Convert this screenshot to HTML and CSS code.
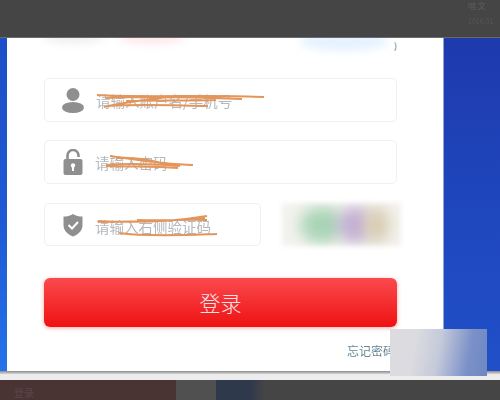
FILE: index.html
```html
<!DOCTYPE html>
<html lang="zh">
<head>
<meta charset="utf-8">
<title>登录</title>
<link rel="stylesheet" href="styles.css">
</head>
<body>
<div class="page">
  <header class="topbar">
    <div class="top-note"><span>啮 文</span><span class="top-date">2016.01</span></div>
  </header>
  <main class="stage">
    <div class="rail"></div>
    <section class="panel">
      <span class="blob blob-gray"></span>
      <span class="blob blob-pink"></span>
      <span class="blob blob-blue"></span>
      <span class="paren">)</span>
      <form class="form">
        <div class="field">
          <svg class="icon" viewBox="0 0 22 25"><circle cx="11" cy="6.500" r="6.500"/><ellipse cx="11" cy="19.500" rx="11" ry="5.500"/></svg>
          <span class="hint">请输入账户名/手机号</span>
          <svg class="scribble" viewBox="0 0 170 24"><path d="M1 5C50 8 120 4 168 7M10 8C50 6 100 7 146 9M8 17C30 12 50 10 72 7M12 16C40 14 60 15 112 16M30 11C60 10 90 11 120 10"/></svg>
        </div>
        <div class="field">
          <svg class="icon icon-lock" viewBox="0 0 20 26"><path d="M4.500 11V6.500a5.500 5.500 0 0 1 11 0V8" class="shackle"/><rect x="0.500" y="10" width="19" height="16" rx="2"/><circle class="cut" cx="10" cy="16.500" r="2.200"/><rect class="cut" x="9" y="17" width="2" height="5"/></svg>
          <span class="hint">请输入密码</span>
          <svg class="scribble scribble-short" viewBox="0 0 92 24"><path d="M8 5C30 8 60 13 91 14M4 14C30 12 50 13 78 15M4 15C30 16 50 15 76 17M14 7C30 6 50 9 66 14"/></svg>
        </div>
        <div class="code-row">
          <div class="field field-code">
            <svg class="icon icon-shield" viewBox="0 0 20 24"><path d="M10 1C13 3 16 3.500 19.500 3.500V12C19.500 18 15 21.500 10 23.500C5 21.500 .5 18 .5 12V3.500C4 3.500 7 3 10 1Z"/><path class="tick" d="M5.500 12L9 15.500L15 9"/></svg>
            <span class="hint">请输入右侧验证码</span>
            <svg class="scribble scribble-code" viewBox="0 0 122 28"><path d="M1 8C40 10 80 8 110 3M1 9C40 8 70 9 108 5M40 7C70 8 90 6 110 7M22 20C50 24 90 22 120 21"/></svg>
          </div>
          <div class="captcha">
            <span class="swatch swatch-green"></span>
            <span class="swatch swatch-purple"></span>
            <span class="swatch swatch-tan"></span>
          </div>
        </div>
        <button class="login" type="button">登录</button>
        <div class="links"><a class="forgot">忘记密码</a></div>
      </form>
    </section>
    <div class="side"></div>
  </main>
  <div class="strip"></div>
  <footer class="bottombar">
    <div class="tab tab-red"><span>登录</span></div>
    <div class="tab tab-gray"></div>
    <div class="tab tab-navy"></div>
  </footer>
  <div class="patch"></div>
</div>
</body>
</html>
```
FILE: styles.css
```css
* { box-sizing: border-box; }
html, body { margin: 0; padding: 0; }
body { font-family: "Noto Sans CJK SC", "Liberation Sans", sans-serif; background: #ececec; }
.page { position: relative; width: 500px; height: 400px; overflow: hidden; display: flex; flex-direction: column; }

.topbar { flex: none; height: 38px; background: #454545; border-bottom: 1px solid #6a6a6a; display: flex; justify-content: flex-end; }
.top-note { width: 32px; display: flex; flex-direction: column; gap: 5px; font-size: 8px; line-height: 11px; color: #5f5f5f; white-space: nowrap; filter: blur(.5px); }
.top-date { color: #565656; font-size: 7px; }

.stage { flex: none; height: 333px; display: flex; }
.rail { width: 7px; background: linear-gradient(#1c4fc8, #1f5ad2 55%, #2473e8); }
.panel { position: relative; width: 436px; background: #fff; padding: 40px 42px 0 37px; overflow: hidden; }
.side { flex: 1; background: linear-gradient(#1e3aad, #1f46bd 50%, #2050c8); border-left: 1px solid #8fa3d8; }

.blob { position: absolute; top: -7px; height: 12px; border-radius: 50%; filter: blur(4px); }
.blob-gray { left: 36px; width: 62px; background: #eeeeee; }
.blob-pink { left: 112px; width: 66px; background: #ffe4e6; }
.blob-blue { left: 292px; width: 90px; height: 20px; background: #e6f2ff; }
.paren { position: absolute; left: 387px; top: 1px; font-size: 9px; line-height: 13px; color: #55606e; }

.form { display: flex; flex-direction: column; }
.field { position: relative; flex: none; height: 44px; display: flex; align-items: center; gap: 13px; padding-left: 17px; background: #fff; border: 1px solid #eef0f2; border-radius: 5px; margin-bottom: 18px; width: 353px; }
.field + .field { margin-bottom: 19px; }
.icon { width: 22px; height: 25px; fill: #8f8f8f; flex: none; }
.icon-lock { width: 20px; height: 26px; margin-left: 1px; }
.icon-lock .shackle { fill: none; stroke: #8f8f8f; stroke-width: 2.600; }
.icon-lock .cut { fill: #fff; }
.icon-shield { width: 20px; height: 24px; margin-left: 1px; }
.icon-shield .tick { fill: none; stroke: #fff; stroke-width: 2; }
.hint { font-size: 14.500px; line-height: 18px; color: #b4b8bd; white-space: nowrap; filter: blur(.5px); margin-left: -1px; position: relative; top: 1px; }
.scribble { position: absolute; left: 51px; top: 11px; width: 170px; height: 24px; fill: none; stroke: #e4955a; stroke-width: 2; filter: blur(.4px); }
.scribble-short { width: 92px; left: 57px; top: 10px; }
.scribble-code { width: 122px; height: 28px; left: 52px; top: 9px; }

.code-row { flex: none; display: flex; align-items: stretch; gap: 21px; margin-bottom: 32px; }
.field-code { width: 217px; height: 43px; margin-bottom: 0; }
.field-code .hint { top: 2px; }
.captcha { position: relative; flex: none; width: 119px; height: 43px; background: #f3f2ee; filter: blur(2.500px); overflow: hidden; }
.swatch { position: absolute; top: 4px; height: 36px; border-radius: 50%; filter: blur(7px); }
.swatch-green { left: 18px; width: 44px; background: #a9d4b6; }
.swatch-purple { left: 56px; width: 34px; background: #c2aed4; }
.swatch-tan { left: 82px; width: 26px; background: #d8cdb2; }

.login { flex: none; width: 353px; height: 49px; border: 0; border-radius: 6px; padding: 0; background: linear-gradient(#fa4a4e, #ee1212); box-shadow: 0 1px 4px rgba(245, 60, 60, .45); color: #f8e4e4; font-family: inherit; font-size: 21px; font-weight: 300; line-height: 49px; }
.links { display: flex; justify-content: flex-end; width: 353px; padding-top: 15px; }
.forgot { width: 50px; font-size: 12px; line-height: 18px; color: #6a8597; white-space: nowrap; filter: blur(.3px); }

.strip { flex: none; height: 9px; background: linear-gradient(#8b8b8b, #cfcfcf 30%, #ededed 40%); }
.bottombar { flex: none; height: 20px; display: flex; background: #454545; }
.tab { height: 20px; }
.tab-red { width: 176px; background: #4a3433; padding-left: 14px; font-size: 10px; line-height: 24px; height: 20px; color: #584947; }
.tab-red span { display: block; height: 20px; line-height: 26px; filter: blur(.6px); }
.tab-gray { width: 40px; background: #505050; }
.tab-navy { width: 49px; background: linear-gradient(90deg, #2f394c 70%, #454545); }

.patch { position: absolute; left: 390px; top: 329px; width: 97px; height: 47px; background: linear-gradient(100deg, #dcdce0 25%, #c5cada 50%, #7a90c8 80%, #6f88c2); }
```
